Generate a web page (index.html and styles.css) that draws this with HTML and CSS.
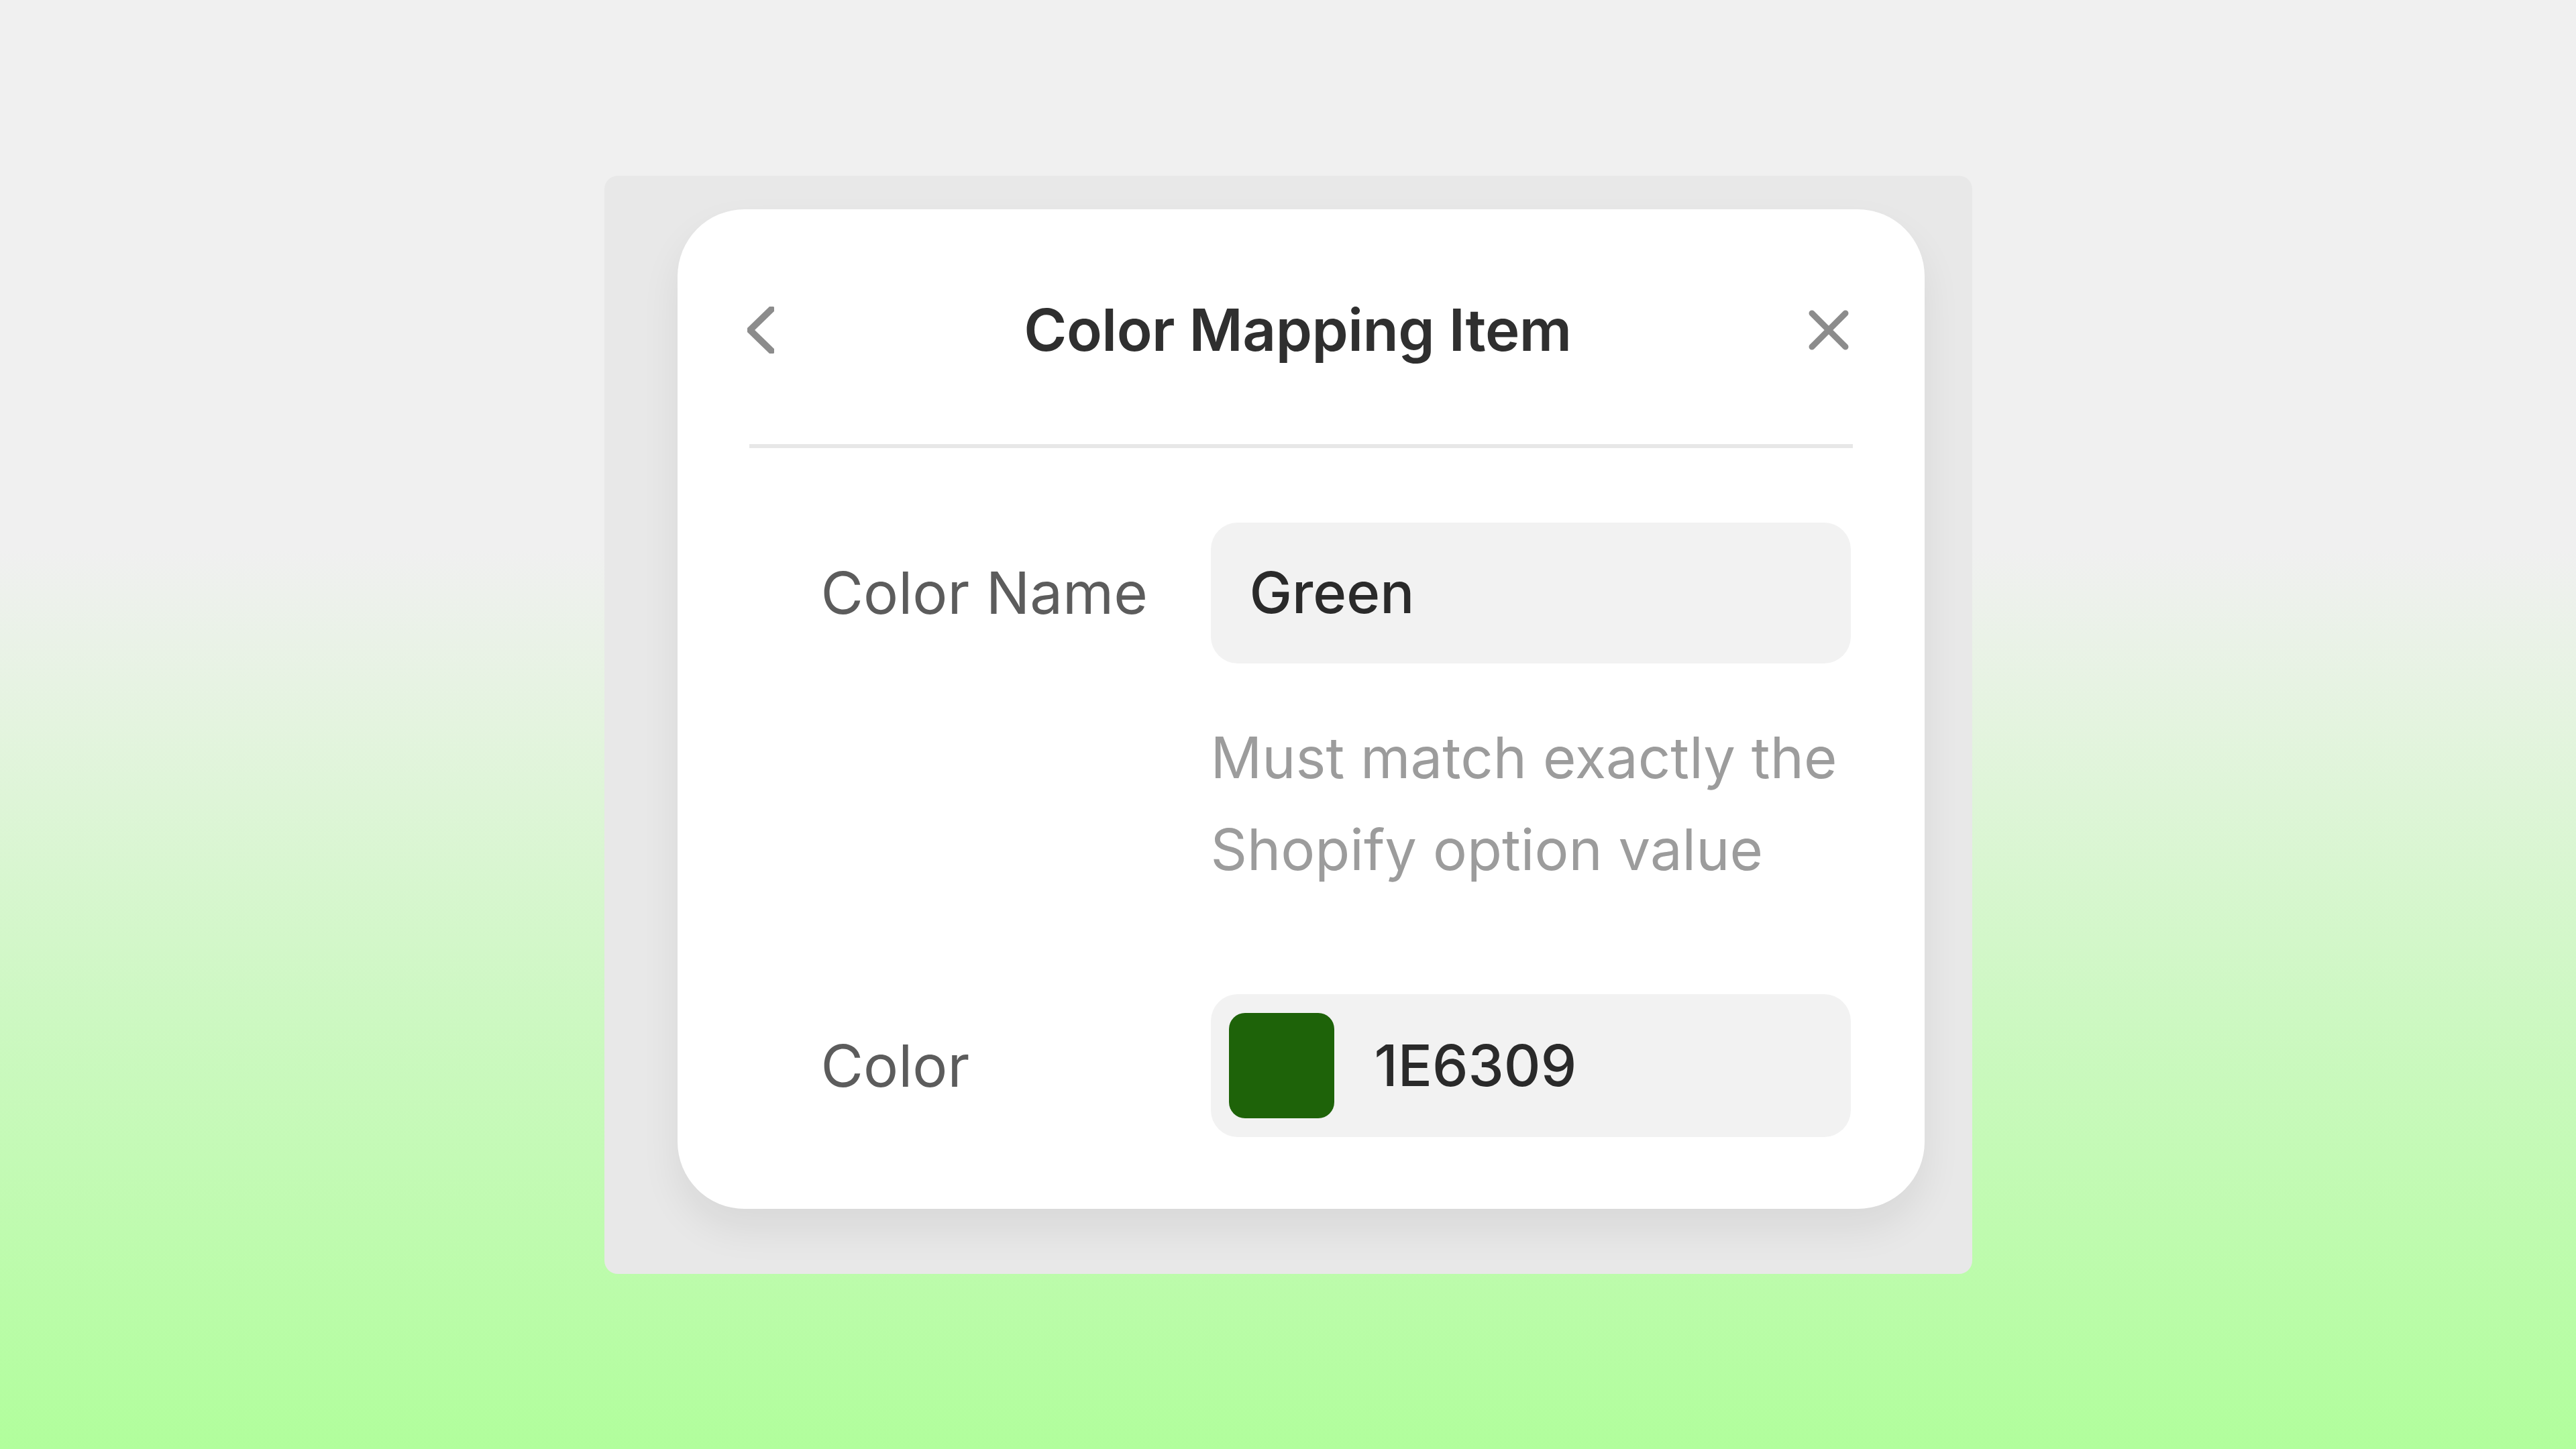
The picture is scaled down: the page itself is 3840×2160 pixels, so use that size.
FILE: index.html
```html
<!DOCTYPE html>
<html lang="en">
<head>
<meta charset="utf-8">
<title>Color Mapping Item</title>
<link rel="stylesheet" href="styles.css">
</head>
<body>
<div class="frame">
  <div class="card">
    <div class="header">
      <button class="icon-btn back" aria-label="Back">
        <svg width="40" height="70" viewBox="0 0 40 70"><polyline points="36,4 4,35 36,66" fill="none" stroke="#8c8c8c" stroke-width="10" stroke-linecap="round" stroke-linejoin="round"/></svg>
      </button>
      <h1 class="title">Color Mapping Item</h1>
      <button class="icon-btn close" aria-label="Close">
        <svg width="60" height="60" viewBox="0 0 60 60"><path d="M5 5 L55 55 M55 5 L5 55" fill="none" stroke="#8c8c8c" stroke-width="9" stroke-linecap="round"/></svg>
      </button>
    </div>
    <div class="form">
      <div class="row">
        <div class="label">Color Name</div>
        <div class="field">
          <div class="input">Green</div>
          <p class="help">Must match exactly the<br>Shopify option value</p>
        </div>
      </div>
      <div class="row row-color">
        <div class="label">Color</div>
        <div class="field">
          <div class="input color-input">
            <span class="swatch" style="background:#1E6309"></span>
            <span class="hex">1E6309</span>
          </div>
        </div>
      </div>
    </div>
  </div>
</div>
</body>
</html>
```

FILE: styles.css
```css
* { box-sizing: border-box; }

html, body {
  margin: 0;
  padding: 0;
}

body {
  width: 3840px;
  height: 2160px;
  font-family: Inter, "Noto Sans", "Liberation Sans", sans-serif;
  background: linear-gradient(to bottom, #f0f0f0 0%, #f0f0f0 38%, #e4f4df 50%, #cdf8c2 70%, #b1fe9c 100%);
  display: flex;
  align-items: center;
  justify-content: center;
}

.frame {
  width: 2039px;
  height: 1637px;
  background: #e8e8e8;
  border-radius: 20px;
  padding: 50px 71px 97px 109px;
}

.card {
  width: 1859px;
  background: #ffffff;
  border-radius: 100px;
  padding: 0 107px 107px;
  box-shadow: 0 30px 60px rgba(0, 0, 0, 0.07);
}

.header {
  height: 356px;
  padding-top: 10px;
  border-bottom: 6px solid #e7e7e7;
  display: flex;
  align-items: center;
  justify-content: space-between;
}

.icon-btn {
  border: 0;
  background: none;
  padding: 0;
  margin: 0;
  width: 70px;
  height: 70px;
  display: flex;
  align-items: center;
}

.back { justify-content: flex-start; margin-left: -3px; }
.close { justify-content: flex-end; margin-right: 6px; }

.title {
  margin: 0;
  font-size: 87px;
  font-weight: 600;
  color: #2f2f2f;
  letter-spacing: -0.5px;
}

.form {
  padding-top: 111px;
}

.row {
  display: grid;
  grid-template-columns: 688px 954px;
}

.row-color {
  margin-top: 147px;
}

.label {
  padding-left: 107px;
  height: 210px;
  display: flex;
  align-items: center;
  font-size: 87px;
  color: #5c5c5c;
}

.row-color .label { height: 213px; }

.input {
  height: 210px;
  background: #f2f2f2;
  border-radius: 40px;
  padding-left: 58px;
  display: flex;
  align-items: center;
  font-size: 85px;
  font-weight: 500;
  color: #2a2a2a;
}

.color-input {
  height: 213px;
  padding-left: 27px;
  gap: 60px;
}

.swatch {
  width: 157px;
  height: 157px;
  border-radius: 24px;
  flex: none;
}

.help {
  margin: 72px 0 0;
  font-size: 85px;
  line-height: 137px;
  color: #9c9c9c;
  white-space: nowrap;
}
```
